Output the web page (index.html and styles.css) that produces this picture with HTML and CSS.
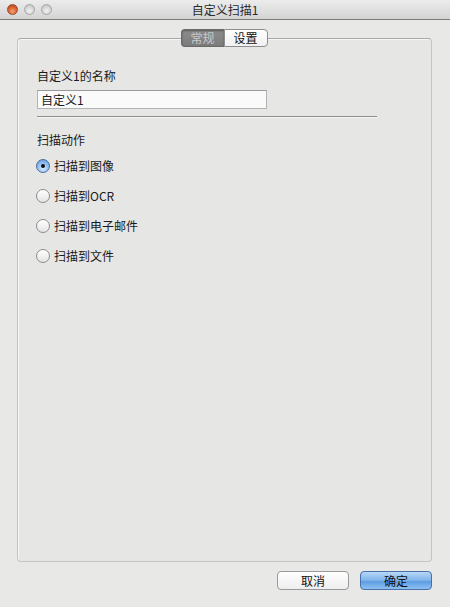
FILE: index.html
```html
<!DOCTYPE html>
<html lang="zh">
<head>
<meta charset="utf-8">
<link rel="stylesheet" href="styles.css">
</head>
<body>
<div class="window">
  <div class="titlebar">
    <div class="lights">
      <span class="light red"></span>
      <span class="light gray"></span>
      <span class="light gray"></span>
    </div>
    <div class="title">自定义扫描1</div>
  </div>
  <div class="content">
    <div class="tabs">
      <span class="tab selected">常规</span>
      <span class="tab">设置</span>
    </div>
    <div class="panel">
      <div class="label">自定义1的名称</div>
      <div class="input">自定义1</div>
      <div class="sep"></div>
      <div class="label section">扫描动作</div>
      <div class="radios">
        <div class="radio-row"><span class="radio checked"></span><span>扫描到图像</span></div>
        <div class="radio-row"><span class="radio"></span><span>扫描到OCR</span></div>
        <div class="radio-row"><span class="radio"></span><span>扫描到电子邮件</span></div>
        <div class="radio-row"><span class="radio"></span><span>扫描到文件</span></div>
      </div>
    </div>
    <div class="buttons">
      <span class="btn">取消</span>
      <span class="btn primary">确定</span>
    </div>
  </div>
</div>
</body>
</html>
```
FILE: styles.css
```css
html, body {
  margin: 0;
  padding: 0;
  background: #e8e8e6;
}
body {
  font-family: "Noto Sans CJK SC", "Noto Sans", sans-serif;
  font-size: 12px;
  color: #1a1a1a;
}
.window {
  width: 450px;
  height: 607px;
  display: flex;
  flex-direction: column;
  background: #e8e8e6;
}
.titlebar {
  height: 19px;
  border-bottom: 1px solid #7a7a7a;
  background: linear-gradient(#ececec, #d4d4d4);
  display: flex;
  align-items: center;
  position: relative;
}
.lights {
  display: flex;
  gap: 6px;
  padding-left: 7px;
}
.light {
  width: 11px;
  height: 11px;
  border-radius: 50%;
  box-sizing: border-box;
}
.light.red {
  background: radial-gradient(circle at 50% 70%, #f6a274 0%, #d8602e 55%, #a8421c 100%);
  border: 1px solid #9c4a2a;
}
.light.gray {
  background: radial-gradient(circle at 50% 65%, #f2f2f2 0%, #d2d2d2 60%, #b8b8b8 100%);
  border: 1px solid #a6a6a6;
}
.title {
  position: absolute;
  left: 0;
  right: 0;
  top: 0;
  height: 19px;
  line-height: 19px;
  text-align: center;
  font-size: 12px;
  color: #2a2a2a;
}
.content {
  flex: 1;
  display: flex;
  flex-direction: column;
  padding: 9px 18px 0 17px;
}
.tabs {
  display: flex;
  justify-content: center;
  margin-bottom: -9px;
  position: relative;
  z-index: 1;
  padding-right: 1px;
}
.tab {
  height: 16px;
  line-height: 16px;
  padding: 0 7px;
  border: 1px solid #8e8e8e;
  background: linear-gradient(#ffffff, #f0f0f0);
  color: #111;
  font-size: 12px;
  width: 28px;
  text-align: center;
}
.tab:first-child {
  border-radius: 4px 0 0 4px;
  border-right: none;
}
.tab:last-child {
  border-radius: 0 4px 4px 0;
}
.tab.selected {
  background: linear-gradient(#8c8c8c, #7c7c7c);
  color: #c8c8c8;
  border-color: #6a6a6a;
  box-shadow: inset 0 1px 2px rgba(0,0,0,0.35);
}
.panel {
  height: 524px;
  box-sizing: border-box;
  border: 1px solid #c4c4c2;
  border-top-color: #a8a8a6;
  border-radius: 4px;
  background: #e6e6e4;
  box-shadow: inset 1px 1px 0 #f6f6f4;
  padding: 28px 19px 0 19px;
  display: flex;
  flex-direction: column;
}
.label {
  line-height: 18px;
  height: 18px;
}
.input {
  margin-top: 5px;
  width: 230px;
  height: 19px;
  box-sizing: border-box;
  border: 1px solid #b2b2b2;
  border-top-color: #9a9a9a;
  background: #fafafa;
  line-height: 17px;
  padding-left: 3px;
  font-size: 12px;
}
.sep {
  margin-top: 7px;
  width: 340px;
  height: 1px;
  background: #8e8e8c;
  border-bottom: 1px solid #f4f4f2;
}
.section {
  margin-top: 13px;
}
.radios {
  margin-top: 8px;
  display: flex;
  flex-direction: column;
  gap: 12px;
}
.radio-row {
  display: flex;
  align-items: center;
  gap: 4px;
  height: 18px;
  line-height: 18px;
}
.radio {
  width: 14px;
  height: 14px;
  box-sizing: border-box;
  border-radius: 50%;
  border: 1px solid #8c8c8c;
  background: linear-gradient(#ffffff, #e4e4e4);
  position: relative;
  margin-left: -1px;
}
.radio.checked {
  border-color: #4a6c9c;
  background: radial-gradient(circle at 50% 70%, #d8ecff 0%, #8cbcf0 55%, #5c8ed4 100%);
}
.radio.checked::after {
  content: "";
  position: absolute;
  left: 4px;
  top: 4px;
  width: 4px;
  height: 4px;
  border-radius: 50%;
  background: #111;
}
.buttons {
  display: flex;
  justify-content: flex-end;
  gap: 11px;
  margin-top: 9px;
  padding-right: 0;
}
.btn {
  width: 72px;
  height: 19px;
  box-sizing: border-box;
  border: 1px solid #9a9a9a;
  border-radius: 4px;
  background: linear-gradient(#ffffff, #eeeeee);
  text-align: center;
  line-height: 17px;
  font-size: 12px;
  color: #111;
}
.btn.primary {
  border-color: #4a6ea6;
  background: linear-gradient(#b8d8f8, #7cb2ea 50%, #5a9ae0 51%, #8cc0f2);
}
```
